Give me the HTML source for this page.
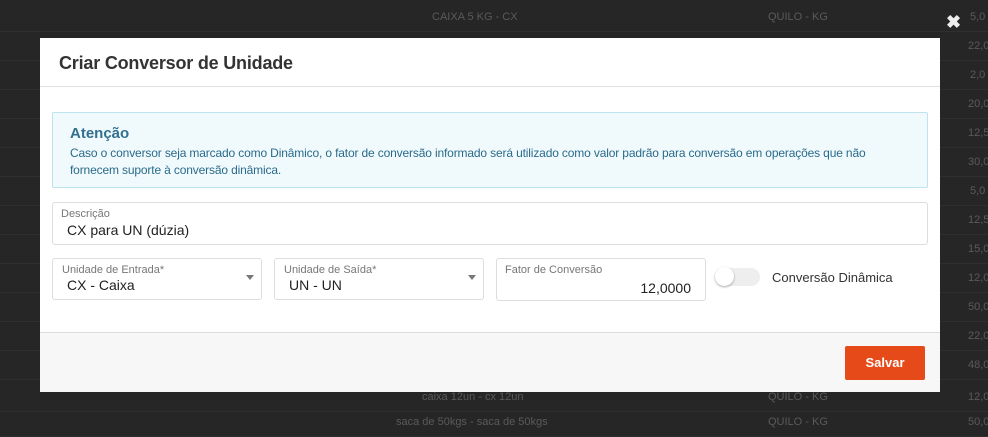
<!DOCTYPE html><html><head><style>
body{margin:0;width:988px;height:427px;background:#262626;font-family:"Liberation Sans",sans-serif;position:relative;overflow:hidden}
.row{position:absolute;left:0;width:988px;height:29px;border-bottom:1px solid #2f2f2f;color:#5a5a5a;font-size:11px}
.row span{position:absolute;top:9px}
.modal{position:absolute;left:40px;top:38px;width:900px;height:353px;background:#fff}
.hd{height:49px;border-bottom:1px solid #e0e0e0;font-size:18px;font-weight:bold;color:#333;padding-left:19px;line-height:50px;box-sizing:border-box;letter-spacing:-0.2px}
.alert{position:absolute;left:12px;top:74px;width:876px;height:76px;background:#f0fafd;border:1px solid #bfe3ee;border-radius:2px;box-sizing:border-box;padding:12px 17px;color:#31708f}
.alert b{font-size:15px;display:block;margin-bottom:3px}
.alert p{margin:0;font-size:12px;line-height:17px;color:#2a6a8a;letter-spacing:-0.15px;padding-right:12px}
.f{position:absolute;border:1px solid #ddd;border-radius:3px;box-sizing:border-box;background:#fff}
.f label{position:absolute;left:8px;top:5px;font-size:11px;color:#777}
.f .v{position:absolute;left:9px;top:19px;font-size:14px;color:#222}
.arr{position:absolute;right:7px;top:16px;width:0;height:0;border-left:4px solid transparent;border-right:4px solid transparent;border-top:5px solid #777}
.ft{position:absolute;left:0;top:294px;width:900px;height:59px;background:#f7f7f7;border-top:1px solid #ddd}
.btn{position:absolute;right:15px;top:13px;width:80px;height:34px;background:#e64a19;color:#fff;font-size:13px;font-weight:bold;text-align:center;line-height:34px;border-radius:2px}
</style></head><body>
<div class="row" style="top:2px"><span style="left:432px">CAIXA 5 KG - CX</span><span style="left:768px">QUILO - KG</span><span style="left:970px">5,0</span></div>
<div class="row" style="top:31px"><span style="left:968px">22,0</span></div>
<div class="row" style="top:60px"><span style="left:970px">2,0</span></div>
<div class="row" style="top:89px"><span style="left:968px">20,0</span></div>
<div class="row" style="top:118px"><span style="left:968px">12,5</span></div>
<div class="row" style="top:147px"><span style="left:968px">30,0</span></div>
<div class="row" style="top:176px"><span style="left:970px">5,0</span></div>
<div class="row" style="top:205px"><span style="left:968px">12,5</span></div>
<div class="row" style="top:234px"><span style="left:968px">15,0</span></div>
<div class="row" style="top:263px"><span style="left:968px">12,0</span></div>
<div class="row" style="top:292px"><span style="left:968px">50,0</span></div>
<div class="row" style="top:321px"><span style="left:968px">22,0</span></div>
<div class="row" style="top:350px"><span style="left:968px">48,0</span></div>
<div class="row" style="top:382px"><span style="left:422px">caixa 12un - cx 12un</span><span style="left:768px">QUILO - KG</span><span style="left:968px">12,0</span></div>
<div class="row" style="top:407px"><span style="left:396px">saca de 50kgs - saca de 50kgs</span><span style="left:768px">QUILO - KG</span><span style="left:968px">50,0</span></div>
<div style="position:absolute;left:946px;top:12px;color:#eee;font-size:18px;font-weight:bold">✖</div>
<div class="modal">
<div class="hd">Criar Conversor de Unidade</div>
<div class="alert"><b>Atenção</b><p>Caso o conversor seja marcado como Dinâmico, o fator de conversão informado será utilizado como valor padrão para conversão em operações que não fornecem suporte à conversão dinâmica.</p></div>
<div class="f" style="left:12px;top:164px;width:876px;height:43px"><label>Descrição</label><div class="v" style="left:14px">CX para UN (dúzia)</div></div>
<div class="f" style="left:12px;top:220px;width:210px;height:42px"><label style="left:9px">Unidade de Entrada*</label><div class="v" style="left:14px;top:18px">CX - Caixa</div><div class="arr"></div></div>
<div class="f" style="left:234px;top:220px;width:210px;height:42px"><label style="left:9px">Unidade de Saída*</label><div class="v" style="left:14px;top:18px">UN - UN</div><div class="arr"></div></div>
<div class="f" style="left:456px;top:220px;width:210px;height:43px"><label>Fator de Conversão</label><div class="v" style="left:auto;right:14px;top:21px">12,0000</div></div>
<div style="position:absolute;left:676px;top:230px;width:44px;height:18px;border-radius:9px;background:#eee"></div>
<div style="position:absolute;left:675px;top:229px;width:19px;height:19px;border-radius:50%;background:#fff;box-shadow:0 1px 2px rgba(0,0,0,.35)"></div>
<div style="position:absolute;left:732px;top:232px;font-size:13px;color:#333">Conversão Dinâmica</div>
<div class="ft"><div class="btn">Salvar</div></div>
</div>
</body></html>
